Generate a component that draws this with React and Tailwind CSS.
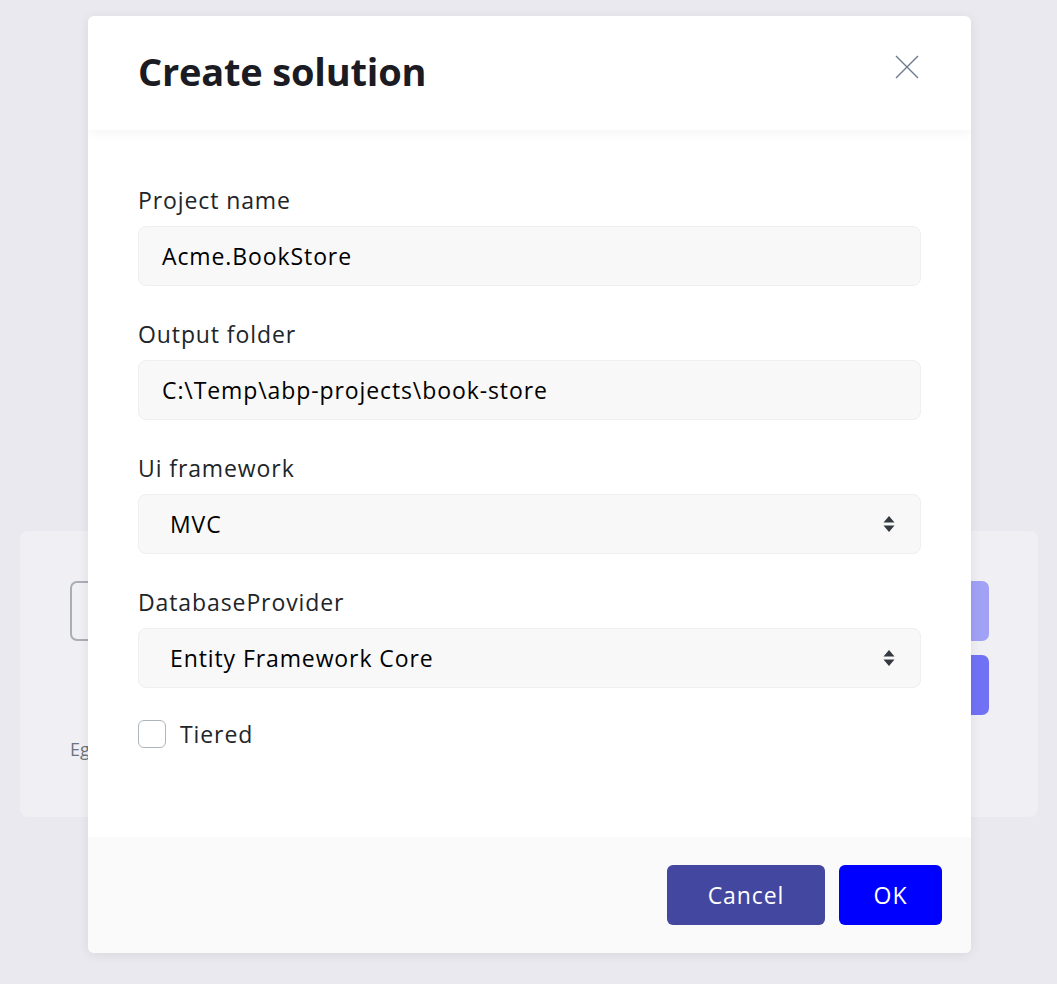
import React from "react";

const font = { fontFamily: '"Open Sans", "Liberation Sans", sans-serif' };

function Chevrons() {
  return (
    <svg width="12" height="18" viewBox="0 0 12 18" className="shrink-0">
      <path d="M6 1 L11.5 7.5 L0.5 7.5 Z" fill="#343a40" />
      <path d="M6 17 L11.5 10.5 L0.5 10.5 Z" fill="#343a40" />
    </svg>
  );
}

function Field({ label, children }) {
  return (
    <div className="flex flex-col gap-[11px]">
      <div className="text-[23px] leading-[30px] tracking-[0.9px] text-[#212529]">{label}</div>
      {children}
    </div>
  );
}

function TextBox({ children }) {
  return (
    <div className="h-[60px] rounded-[8px] bg-[#f8f8f8] border border-[#efefef] flex items-center pl-[23px] text-[23px] tracking-[0.9px] text-black">
      {children}
    </div>
  );
}

function SelectBox({ children }) {
  return (
    <div className="h-[60px] rounded-[8px] bg-[#f8f8f8] border border-[#efefef] flex items-center justify-between pl-[31px] pr-[25px] text-[23px] tracking-[0.9px] text-black">
      <span>{children}</span>
      <Chevrons />
    </div>
  );
}

export default function App() {
  return (
    <div className="relative w-[1057px] h-[984px] bg-[#e9e9ef] overflow-hidden pt-[531px] pl-[20px] pr-[19px]" style={font}>
      {/* background card (page behind the dialog) */}
      <div className="h-[286px] rounded-[8px] bg-[#efeff4] pr-[49px] pl-[50px] pt-[50px] flex justify-between">
        <div className="flex flex-col">
          <div className="w-[300px] h-[60px] rounded-[7px] border-2 border-[#a9adb5]" />
          <div className="mt-[95px] text-[18px] text-[#6c757d]">Eg</div>
        </div>
        <div className="flex flex-col gap-[14px]">
          <div className="w-[200px] h-[60px] rounded-[7px] bg-[#a1a1f6]" />
          <div className="w-[200px] h-[60px] rounded-[7px] bg-[#7171f5]" />
        </div>
      </div>

      {/* modal dialog overlay */}
      <div className="absolute left-[88px] top-[16px] w-[883px] h-[937px] bg-white rounded-[6px] shadow-[0_2px_12px_rgba(0,0,0,0.08)] flex flex-col overflow-hidden">
        <div className="h-[114px] shrink-0 flex items-center justify-between pl-[50px] pr-[52px] relative z-10 shadow-[0_4px_10px_rgba(0,0,0,0.04)]">
          <h1 className="text-[38px] font-bold text-[#1b1b24] tracking-[-0.2px] leading-none mt-[-4px]">Create solution</h1>
          <svg width="24" height="24" viewBox="0 0 24 24" className="mt-[-12px]">
            <path d="M1 1 L23 23 M23 1 L1 23" stroke="#6b7a8f" strokeWidth="1.4" />
          </svg>
        </div>
        <div className="flex-1 px-[50px] pt-[55px] flex flex-col gap-[33px]">
          <Field label="Project name">
            <TextBox>Acme.BookStore</TextBox>
          </Field>
          <Field label="Output folder">
            <TextBox>C:\Temp\abp-projects\book-store</TextBox>
          </Field>
          <Field label="Ui framework">
            <SelectBox>MVC</SelectBox>
          </Field>
          <Field label="DatabaseProvider">
            <SelectBox>Entity Framework Core</SelectBox>
          </Field>
          <label className="flex items-center gap-[14px] mt-[-4px]">
            <span className="w-[28px] h-[28px] rounded-[6px] border border-[#adb5bd] bg-white" />
            <span className="text-[23px] tracking-[0.9px] text-[#212529]">Tiered</span>
          </label>
        </div>
        <div className="h-[116px] shrink-0 bg-[#fafafa] flex items-center justify-end gap-[14px] pr-[29px]">
          <button className="w-[158px] h-[60px] rounded-[6px] bg-[#4347a0] text-white text-[23px] tracking-[0.9px]">Cancel</button>
          <button className="w-[103px] h-[60px] rounded-[6px] bg-[#0000ff] text-white text-[23px] tracking-[0.9px]">OK</button>
        </div>
      </div>
    </div>
  );
}
